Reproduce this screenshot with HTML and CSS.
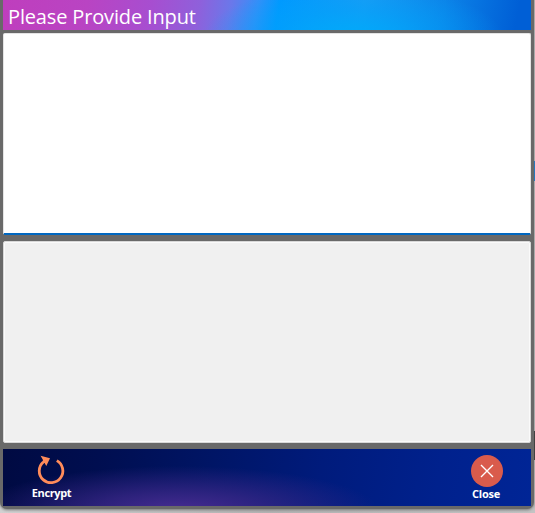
FILE: index.html
```html
<!DOCTYPE html>
<html lang="en">
<head>
<meta charset="utf-8">
<title>Please Provide Input</title>
<link rel="stylesheet" href="styles.css">
</head>
<body>
<main class="window">
  <header class="header"><h1>Please Provide Input</h1></header>
  <textarea class="field input" aria-label="Input"></textarea>
  <textarea class="field output" aria-label="Output" readonly></textarea>
  <footer class="footer">
    <button class="action encrypt">
      <svg width="32" height="32" viewBox="0 0 32 32"><path d="M20.8 5.6A11.8 11.8 0 1 1 7.3 7" fill="none" stroke="#ff8c5a" stroke-width="2.8"/><path d="M4.6 .8L14 3.2L10.3 11L8.6 8L6 8.2L7 5Z" fill="#ff8c5a"/></svg>
      <span>Encrypt</span>
    </button>
    <button class="action close">
      <svg width="32" height="32" viewBox="0 0 32 32"><circle cx="16" cy="16" r="16" fill="#d95b4c"/><path d="M10 10L22 22M22 10L10 22" stroke="#fff" stroke-width="1.4"/></svg>
      <span>Close</span>
    </button>
  </footer>
</main>
<aside class="desktop"><i class="blue-mark"></i><i class="dark-mark"></i></aside>
</body>
</html>
```
FILE: styles.css
```css
* { box-sizing: border-box; }
body {
  margin: 0;
  width: 535px;
  height: 513px;
  overflow: hidden;
  display: flex;
  align-items: flex-start;
  background: linear-gradient(90deg, #d2d2d2, #b4b4b4 50%, #c4c4c4);
  font-family: "Open Sans", "Noto Sans", sans-serif;
}
.window {
  width: 534px;
  height: 509px;
  flex: none;
  padding: 0 3px 3px;
  display: flex;
  flex-direction: column;
  background: #696969;
  border-radius: 0 0 7px 7px;
  box-shadow: 0 1px 3px #777;
}
.header {
  height: 30px;
  padding-left: 5px;
  background:
    radial-gradient(ellipse 150px 50px at 350px 36px, #00aafa 0%, #00a4fa88 50%, #009ffa00 100%),
    linear-gradient(100deg, #bf3ebd 0%, #b944c3 16%, #a74ed0 28%, #8f60db 37%, #6a78ea 43%, #348ff8 48%, #0098ff 52%, #1b9bf4 68%, #0c83e8 83%, #005fd6 97%);
}
h1 {
  margin: 0;
  color: #fff;
  font-size: 20px;
  font-weight: 400;
  line-height: 34px;
  letter-spacing: -.15px;
  white-space: nowrap;
}
.field {
  display: block;
  width: 528px;
  margin: 0;
  padding: 6px;
  resize: none;
  outline: 0;
  border: 1px solid #e4e4e4;
  border-radius: 2px;
  font: inherit;
}
.input {
  height: 202px;
  margin-top: 3px;
  background: #fff;
  border-bottom: 2px solid #0067c0;
}
.output {
  height: 202px;
  margin-top: 6px;
  background: #f0f0f0;
  border-color: #d8d8d8;
  box-shadow: inset 0 0 0 1px #fafafa;
}
.footer {
  height: 57px;
  margin-top: 6px;
  padding: 6px 28px 0 29px;
  display: flex;
  justify-content: space-between;
  background:
    radial-gradient(ellipse 200px 44px at 175px 61px, #472c91 0%, #3d2889bb 40%, #30248000 100%),
    linear-gradient(98deg, #000a42 0%, #000e50 18%, #001462 36%, #001b7c 60%, #00218d 82%, #002596 100%);
}
.action {
  padding: 0;
  border: 0;
  background: none;
  display: flex;
  flex-direction: column;
  align-items: center;
  color: #fff;
  font: 700 11px/14px "Open Sans", "Noto Sans", sans-serif;
}
.action svg { display: block; }
.encrypt { width: 39px; }
.close { width: 32px; }
.encrypt span { margin-top: -1px; letter-spacing: -.35px; }
.close span { margin-right: 2px; letter-spacing: -.2px; }
.desktop {
  width: 1px;
  height: 460px;
  flex: none;
  display: flex;
  flex-direction: column;
  justify-content: space-between;
  padding-top: 161px;
  background: #aaa;
}
.blue-mark { height: 20px; background: #2778bd; }
.dark-mark { height: 29px; background: #414141; }
```
